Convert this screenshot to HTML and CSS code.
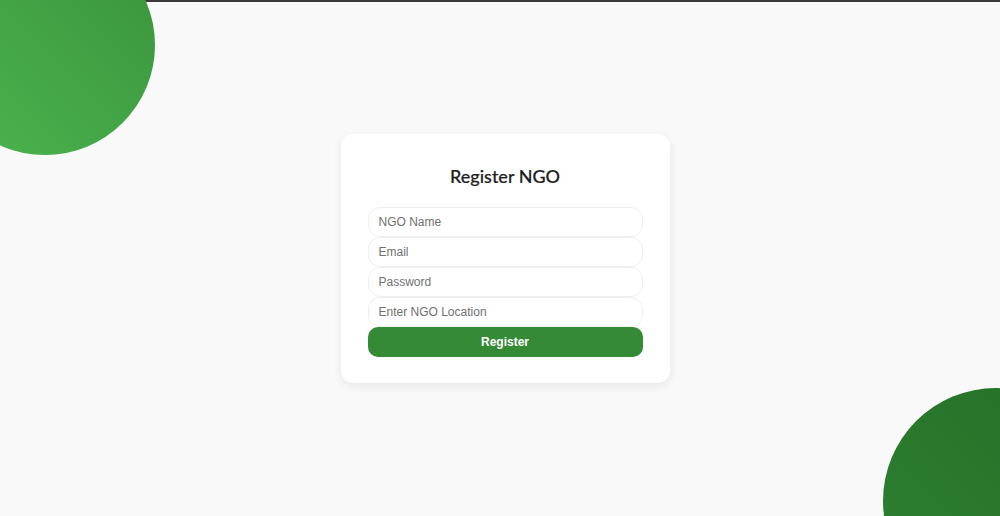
FILE: index.html
```html
<!DOCTYPE html>
<html lang="en">
<head>
    <meta charset="UTF-8">
    <meta name="viewport" content="width=device-width, initial-scale=1.0">
    <title>Register NGO</title>
    <link rel="stylesheet" href="styles.css">
</head>
<body>
    <div class="top-bar"></div>
    <div class="circle circle-top"></div>
    <div class="circle circle-bottom"></div>

    <div class="page">
        <div class="card">
            <h2>Register NGO</h2>
            <form class="register-form">
                <input type="text" placeholder="NGO Name">
                <input type="email" placeholder="Email">
                <input type="password" placeholder="Password">
                <input type="text" placeholder="Enter NGO Location">
                <button type="button">Register</button>
            </form>
        </div>
    </div>
</body>
</html>
```

FILE: styles.css
```css
* {
    box-sizing: border-box;
}
html, body {
    height: 100%;
}
body {
    margin: 0;
    padding: 0;
    background-color: #f9f9f9;
    font-family: "Liberation Sans", Arial, sans-serif;
    overflow: hidden;
}
.top-bar {
    height: 2px;
    background-color: #3a3a3a;
}
.circle {
    position: absolute;
    border-radius: 50%;
}
.circle-top {
    width: 220px;
    height: 220px;
    top: -65px;
    left: -65px;
    background: linear-gradient(45deg, #4cb550, #3a933b);
}
.circle-bottom {
    width: 226px;
    height: 226px;
    top: 388px;
    left: 883px;
    background: linear-gradient(45deg, #2f8132, #236f26);
}
.page {
    height: calc(100% - 2px);
    display: flex;
    justify-content: center;
    padding: 132px 0 0 10px;
}
.card {
    position: relative;
    width: 329px;
    height: 249px;
    padding: 29px 27px 26px;
    background-color: #fff;
    border-radius: 12px;
    box-shadow: 0 3px 10px rgba(0, 0, 0, 0.08);
    text-align: center;
}
h2 {
    margin: 0 0 18px;
    font-family: Lato, "Noto Sans", sans-serif;
    font-size: 18px;
    line-height: 26px;
    font-weight: 500;
    color: #1e1e1e;
    -webkit-text-stroke: 0.2px #1e1e1e;
}
.register-form {
    display: flex;
    flex-direction: column;
}
.register-form input {
    height: 30px;
    margin: 0;
    padding: 0 10px;
    border: 1px solid #efefef;
    border-radius: 12px;
    font-family: "Liberation Sans", Arial, sans-serif;
    font-size: 12px;
    color: #333;
    background-color: #fff;
    outline: none;
}
.register-form input::placeholder {
    color: #707070;
}
.register-form button {
    height: 30px;
    border: none;
    border-radius: 10px;
    background-color: #358a35;
    color: #fff;
    font-family: "Liberation Sans", Arial, sans-serif;
    font-size: 12px;
    font-weight: bold;
    cursor: pointer;
}
.register-form button:hover {
    background-color: #2e7d32;
}
```
